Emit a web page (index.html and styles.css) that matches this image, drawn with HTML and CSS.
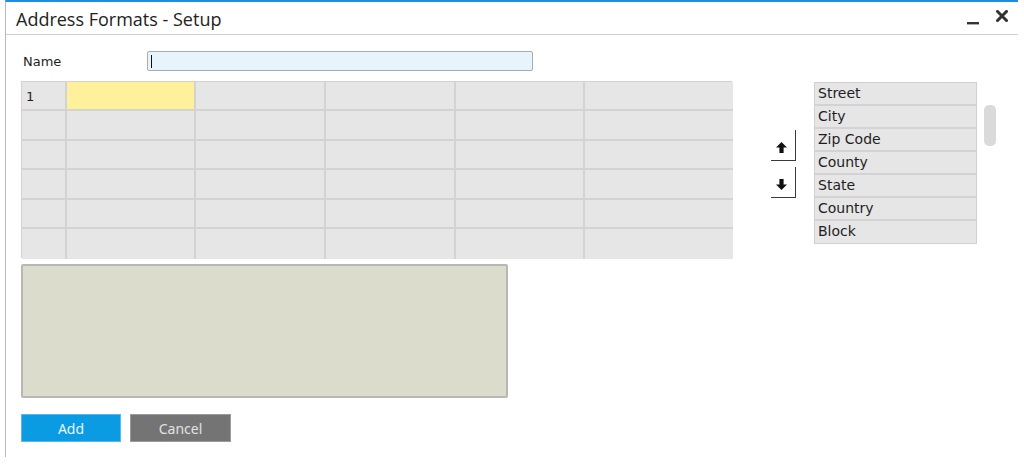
FILE: index.html
```html
<!DOCTYPE html>
<html>
<head>
<meta charset="utf-8">
<link rel="stylesheet" href="styles.css">
</head>
<body>
<div class="window">
  <div class="titlebar">
    <div class="title">Address Formats - Setup</div>
    <div class="controls">
      <svg class="ctl-min" width="12" height="3" viewBox="0 0 12 3"><rect x="0" y="0" width="12" height="2.4" fill="#333"/></svg>
      <svg class="ctl-close" width="12" height="12" viewBox="0 0 12 12"><path d="M1.5 1.5 L10.5 10.5 M10.5 1.5 L1.5 10.5" stroke="#333" stroke-width="3" stroke-linecap="square"/></svg>
    </div>
  </div>
  <div class="content">
    <div class="name-row">
      <label class="name-label">Name</label>
      <div class="name-input"><span class="caret"></span></div>
    </div>
    <div class="main">
      <div class="left">
        <div class="grid">
          <div class="cell rh">1</div><div class="cell sel"></div><div class="cell"></div><div class="cell"></div><div class="cell"></div><div class="cell last"></div>
          <div class="cell rh"></div><div class="cell"></div><div class="cell"></div><div class="cell"></div><div class="cell"></div><div class="cell last"></div>
          <div class="cell rh"></div><div class="cell"></div><div class="cell"></div><div class="cell"></div><div class="cell"></div><div class="cell last"></div>
          <div class="cell rh"></div><div class="cell"></div><div class="cell"></div><div class="cell"></div><div class="cell"></div><div class="cell last"></div>
          <div class="cell rh"></div><div class="cell"></div><div class="cell"></div><div class="cell"></div><div class="cell"></div><div class="cell last"></div>
          <div class="cell rh bottom"></div><div class="cell bottom"></div><div class="cell bottom"></div><div class="cell bottom"></div><div class="cell bottom"></div><div class="cell last bottom"></div>
        </div>
        <div class="preview"></div>
        <div class="buttons">
          <button class="btn btn-add">Add</button>
          <button class="btn btn-cancel">Cancel</button>
        </div>
      </div>
      <div class="movers">
        <div class="mover">
          <svg width="11" height="11" viewBox="0 0 11 11"><polygon points="5.5,0 11,5.5 7.6,5.5 7.6,11 3.4,11 3.4,5.5 0,5.5" fill="#111"/></svg>
        </div>
        <div class="mover">
          <svg width="11" height="11" viewBox="0 0 11 11"><polygon points="5.5,11 11,5.5 7.6,5.5 7.6,0 3.4,0 3.4,5.5 0,5.5" fill="#111"/></svg>
        </div>
      </div>
      <div class="fields">
        <div class="field">Street</div>
        <div class="field">City</div>
        <div class="field">Zip Code</div>
        <div class="field">County</div>
        <div class="field">State</div>
        <div class="field">Country</div>
        <div class="field lastf">Block</div>
      </div>
      <div class="scroll"><div class="thumb"></div></div>
    </div>
  </div>
</div>
</body>
</html>
```

FILE: styles.css
```css
html, body {
  margin: 0;
  padding: 0;
  background: #ffffff;
}
body {
  font-family: "DejaVu Sans", sans-serif;
  color: #1e1e1e;
}
.window {
  margin-left: 5px;
  width: 1012px;
  height: 455px;
  border-left: 1px solid #b9b9b9;
  border-top: 2px solid #1a8fe3;
  box-sizing: content-box;
}
.titlebar {
  height: 32px;
  border-bottom: 1px solid #cfcfcf;
  display: flex;
  align-items: center;
  justify-content: space-between;
}
.title {
  font-family: "Open Sans", "Noto Sans", sans-serif;
  font-size: 18px;
  color: #222;
  padding-left: 10px;
  padding-top: 1px;
}
.controls {
  display: flex;
  align-items: flex-start;
  gap: 17px;
  padding-right: 10px;
  height: 14px;
}
.ctl-min {
  margin-top: 11px;
}
.ctl-close {
  margin-top: -1px;
}
.content {
  padding-left: 15px;
}
.name-row {
  display: flex;
  align-items: center;
  margin-top: 16px;
  height: 20px;
}
.name-label {
  width: 126px;
  padding-left: 2px;
  box-sizing: border-box;
  font-size: 13px;
  color: #1e1e1e;
}
.name-input {
  width: 386px;
  height: 20px;
  box-sizing: border-box;
  background: #e8f4fc;
  border: 1px solid #a9adb0;
  border-radius: 2px;
  display: flex;
  align-items: center;
  padding-left: 3px;
}
.caret {
  width: 1px;
  height: 13px;
  background: #111;
}
.main {
  display: flex;
  align-items: flex-start;
  margin-top: 10px;
}
.left {
  width: 711px;
}
.grid {
  display: grid;
  grid-template-columns: 45px 129px 130px 130px 129px 148px;
  grid-template-rows: 29px 30px 29px 30px 29px 30px;
  border: 1px solid #d2d2d2;
  box-sizing: border-box;
  width: 711px;
  height: 177px;
}
.cell {
  background: #e6e6e6;
  border-right: 2px solid #d3d3d3;
  border-bottom: 2px solid #d3d3d3;
  box-sizing: border-box;
}
.cell.last {
  border-right: none;
}
.cell.bottom {
  border-bottom: none;
}
.cell.rh {
  font-size: 13px;
  padding: 7px 0 0 4px;
  color: #1e1e1e;
}
.cell.sel {
  background: #fff09b;
}
.preview {
  width: 487px;
  height: 134px;
  margin-top: 6px;
  box-sizing: border-box;
  background: #dcdccd;
  border: 2px solid #b8b8b2;
  border-radius: 2px;
}
.buttons {
  display: flex;
  gap: 9px;
  margin-top: 16px;
}
.btn {
  height: 28px;
  box-sizing: border-box;
  font-family: "Noto Sans", "Open Sans", sans-serif;
  font-size: 14px;
  padding: 0;
  border-radius: 0;
  cursor: default;
}
.btn-add {
  width: 100px;
  background: #0b9be2;
  color: #eaf6ff;
  border: 1px solid #5ab9ea;
}
.btn-cancel {
  width: 101px;
  background: #747474;
  color: #e2e2e2;
  border: 1px solid #9a9a9a;
}
.movers {
  display: flex;
  flex-direction: column;
  gap: 6px;
  margin-left: 39px;
  margin-top: 49px;
}
.mover {
  width: 25px;
  height: 31px;
  box-sizing: border-box;
  border-right: 1px solid #3a3a3a;
  border-bottom: 1px solid #3a3a3a;
  display: flex;
  align-items: center;
  justify-content: center;
  padding-top: 4px;
  padding-right: 3px;
}
.fields {
  margin-left: 18px;
  margin-top: 1px;
  width: 163px;
  border: 1px solid #d0d0d0;
  box-sizing: border-box;
}
.field {
  height: 23px;
  box-sizing: border-box;
  background: #e6e6e6;
  border-bottom: 2px solid #d3d3d3;
  font-size: 14px;
  padding: 2px 0 0 3px;
  color: #1e1e1e;
}
.field.lastf {
  border-bottom: none;
  height: 22px;
}
.scroll {
  margin-left: 7px;
  margin-top: 24px;
  width: 12px;
}
.thumb {
  width: 12px;
  height: 41px;
  border-radius: 5px;
  background: #dadada;
}
```
